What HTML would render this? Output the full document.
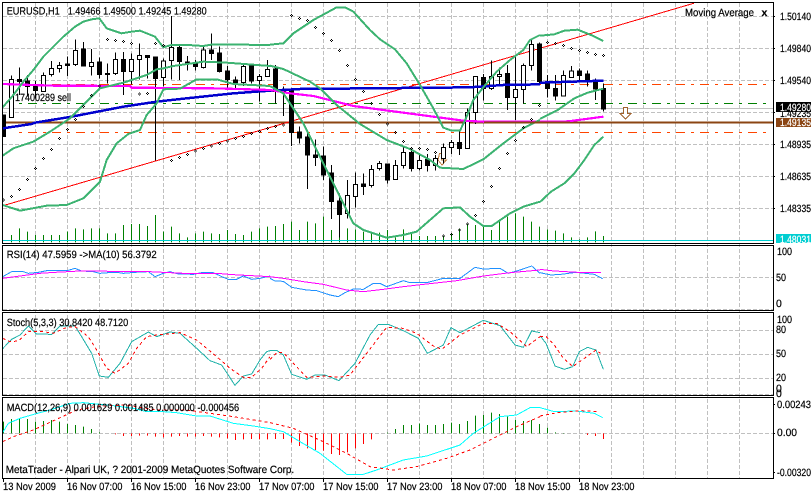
<!DOCTYPE html>
<html><head><meta charset="utf-8"><title>EURUSD,H1</title>
<style>
html,body{margin:0;padding:0;background:#fff;width:811px;height:495px;overflow:hidden}
svg{display:block;shape-rendering:crispEdges}
text{font-family:"Liberation Sans",sans-serif;font-size:10.5px;fill:#000;stroke:#000;stroke-width:.2;text-rendering:geometricPrecision;shape-rendering:auto}
text.w{fill:#fff;stroke:#fff}
.l{fill:none;vector-effect:non-scaling-stroke}
.bb{stroke:#3cb371;stroke-width:2}
.blue{stroke:#0000cd;stroke-width:2.5}
.mag{stroke:#ff00ff;stroke-width:2.2}
.rsi{stroke:#1e90ff;stroke-width:1}
.m1{stroke:#ff00ff;stroke-width:1}
.teal{stroke:#20b2aa;stroke-width:1}
.rd{stroke:#ff0000;stroke-width:1;stroke-dasharray:3 3}
.cy{stroke:#00ffff;stroke-width:1}
.vg{fill:none;stroke:#008000;stroke-width:1}
.vr{fill:none;stroke:#ff0000;stroke-width:1}
.sar{fill:none;stroke:none;marker:url(#s)}
</style></head><body>
<svg width="811" height="495" viewBox="0 0 811 495" xmlns="http://www.w3.org/2000/svg">
<defs><marker id="s" markerUnits="userSpaceOnUse" markerWidth="18" markerHeight="18" refX="9" refY="9" overflow="visible"><path d="M7.5 4.5h3v3h-3zM7.5 10.5h3v3h-3zM4.5 7.5h3v3h-3zM10.5 7.5h3v3h-3z" fill="#000"/></marker></defs>

<!-- grid -->
<g fill="none" stroke="#c0c0c0" stroke-dasharray="4 2">
<path d="M3 16.5H773M3 48.5H773M3 80.5H773M3 112.5H773M3 144.5H773M3 176.5H773M3 208.5H773M3 277.5H773M3 309.5H773M3 330.5H773M3 354.5H773M3 378.5H773M3 394.5H773M3 433.5H773"/>
<path d="M35.5 3V478M67.5 3V478M99.5 3V478M131.5 3V478M163.5 3V478M195.5 3V478M227.5 3V478M259.5 3V478M291.5 3V478M323.5 3V478M355.5 3V478M387.5 3V478M419.5 3V478M451.5 3V478M483.5 3V478M515.5 3V478M547.5 3V478M579.5 3V478M611.5 3V478M643.5 3V478M675.5 3V478M707.5 3V478M739.5 3V478"/>
</g>

<!-- horizontal objects -->
<path d="M3 108.5H773" stroke="#c0c0c0" fill="none"/>
<path d="M18 103.5H766" stroke="#008000" stroke-dasharray="9 6 3 6" stroke-dashoffset="14" fill="none"/>
<path d="M15 84.5H766M15 132.5H766" stroke="#ff4500" stroke-dasharray="9 6 3 6" stroke-dashoffset="11" fill="none"/>
<path d="M3 122.5H773" stroke="#8b4513" stroke-width="2" fill="none"/>
<path d="M3 205.7L694 3.2" stroke="#ff0000" fill="none"/>

<!-- arrows -->
<path d="M623.5 107.5h4v6h3.5L625.5 119 620 113.5h3.5z" fill="#fff" stroke="#a0622d"/>
<path d="M439.5 153.5h2v6.5h5L442 165l-4-5z" fill="none" stroke="#c08040"/>

<g transform="scale(1,.33333)">
<!-- volume -->
<path class="vg" d="M11.5 705V727M19.5 685V727M27.5 695V727M35.5 705V727M43.5 705V727M51.5 705V727M59.5 705V727M67.5 695V727M75.5 685V727M83.5 688V727M91.5 685V727M99.5 685V727M107.5 700V727M115.5 700V727M123.5 675V727M131.5 672V727M139.5 672V727M147.5 678V727M155.5 645V727M163.5 695V727M171.5 680V727M179.5 700V727M187.5 712V727M195.5 700V727M203.5 695V727M211.5 700V727M219.5 702V727M227.5 690V727M235.5 702V727M243.5 705V727M251.5 695V727M259.5 685V727M267.5 680V727M275.5 678V727M283.5 672V727M291.5 665V727M299.5 690V727M307.5 665V727M315.5 670V727M323.5 650V727M331.5 690V727M339.5 665V727M347.5 685V727M355.5 688V727M363.5 695V727M371.5 700V727M379.5 698V727M387.5 690V727M395.5 712V727M403.5 688V727M411.5 700V727M419.5 708V727M427.5 708V727M435.5 708V727M443.5 708V727M451.5 702V727M459.5 688V727M467.5 672V727M475.5 675V727M483.5 680V727M491.5 690V727M499.5 665V727M507.5 650V727M515.5 640V727M523.5 650V727M531.5 665V727M539.5 680V727M547.5 688V727M555.5 692V727M563.5 700V727M571.5 712V727M579.5 718V727M587.5 712V727M595.5 694V727M603.5 708V727"/>
<!-- wicks -->
<path class="l" stroke="#000" stroke-width="1" d="M11.5 226V352M19.5 202V285M27.5 225V290M35.5 243V295M43.5 218V275M51.5 183V230M59.5 186V218M67.5 170V228M75.5 118V198M83.5 126V200M91.5 147V226M99.5 172V236M107.5 190V250M115.5 158V225M123.5 156V285M131.5 160V254M139.5 130V238M147.5 165V235M155.5 171V482M163.5 176V260M171.5 48V238M179.5 136V240M187.5 168V212M195.5 180V212M203.5 135V205M211.5 100V180M219.5 140V218M227.5 198V268M235.5 230V268M243.5 190V258M251.5 190V250M259.5 222V305M267.5 180V230M275.5 195V310M283.5 260V348M291.5 265V438M299.5 380V430M307.5 396V567M315.5 418V498M323.5 440V540M331.5 495V657M339.5 580V712M347.5 540V655M355.5 518V622M363.5 520V585M371.5 495V562M379.5 483V512M387.5 490V550M395.5 480V540M403.5 443V505M411.5 445V515M419.5 462V512M427.5 462V515M435.5 465V512M443.5 430V490M451.5 420V462M459.5 390V465M467.5 326V445M475.5 229V372M483.5 222V302M491.5 182V270M499.5 203V255M507.5 195V330M515.5 168V360M523.5 190V310M531.5 120V212M539.5 128V250M547.5 225V293M555.5 225V302M563.5 212V290M571.5 198V233M579.5 205V240M587.5 212V260M595.5 235V300M603.5 250V335"/>
<!-- black bodies -->
<path class="l" style="fill:#000" stroke="#000" stroke-width="1" d="M3.5 345h2V410h-2zM17.5 238h4V245h-4zM25.5 243h4V260h-4zM33.5 258h4V272h-4zM65.5 192h4V197h-4zM81.5 147h4V198h-4zM97.5 186h4V224h-4zM105.5 220h4V224h-4zM121.5 178h4V214h-4zM145.5 166h4V172h-4zM153.5 171h4V236h-4zM177.5 142h4V184h-4zM185.5 186h4V191h-4zM193.5 190h4V200h-4zM209.5 150h4V161h-4zM217.5 159h4V215h-4zM225.5 213h4V239h-4zM233.5 240h4V247h-4zM249.5 198h4V243h-4zM273.5 207h4V275h-4zM281.5 268h4V276h-4zM289.5 270h4V398h-4zM297.5 396h4V414h-4zM305.5 411h4V465h-4zM313.5 465h4V473h-4zM321.5 468h4V525h-4zM329.5 519h4V605h-4zM337.5 603h4V644h-4zM361.5 552h4V560h-4zM385.5 492h4V540h-4zM409.5 457h4V506h-4zM425.5 478h4V497h-4zM457.5 427h4V445h-4zM481.5 232h4V265h-4zM505.5 220h4V293h-4zM537.5 132h4V245h-4zM545.5 245h4V265h-4zM553.5 265h4V288h-4zM577.5 213h4V226h-4zM585.5 222h4V245h-4zM593.5 241h4V267h-4zM601.5 265h4V327h-4z"/>
<!-- white bodies -->
<path class="l" style="fill:#fff" stroke="#000" stroke-width="1" d="M9.5 238h4V352h-4zM41.5 226h4V275h-4zM49.5 205h4V224h-4zM57.5 196h4V205h-4zM73.5 151h4V194h-4zM89.5 187h4V199h-4zM113.5 178h4V220h-4zM129.5 178h4V214h-4zM137.5 166h4V178h-4zM161.5 183h4V232h-4zM169.5 142h4V181h-4zM201.5 150h4V203h-4zM241.5 199h4V247h-4zM257.5 229h4V241h-4zM265.5 208h4V229h-4zM345.5 586h4V641h-4zM353.5 553h4V590h-4zM369.5 508h4V557h-4zM377.5 490h4V506h-4zM393.5 496h4V538h-4zM401.5 457h4V497h-4zM417.5 481h4V506h-4zM433.5 476h4V496h-4zM441.5 442h4V476h-4zM449.5 427h4V442h-4zM465.5 337h4V445h-4zM473.5 229h4V338h-4zM489.5 229h4V265h-4zM497.5 223h4V229h-4zM513.5 268h4V292h-4zM521.5 196h4V268h-4zM529.5 133h4V196h-4zM561.5 226h4V288h-4zM569.5 213h4V232h-4z"/>
</g>
<path d="M3 240.5H773" stroke="#00ced1" fill="none"/>

<!-- main indicators -->
<g transform="scale(.33333)">
<polyline class="l blue" points="8,385 95,372 105,368 215,350 370,320 470,305 560,295 700,280 810,272"/>
<polyline class="l mag" points="8,252 160,257 390,258 395,263 640,265 750,268 810,270"/>
<polyline class="l bb" points="8,322 40,285 70,245 100,210 130,170 160,140 190,110 225,80 250,65 275,58 298,55 320,85 365,100 395,95 420,92 465,110 490,142 514,135 565,135 610,138 640,133 810,135"/>
<polyline class="l bb" points="8,467 40,445 100,425 150,395 210,355 260,305 300,265 370,248 440,225 470,208 490,205 520,198 610,185 680,188 810,198"/>
<polyline class="l bb" points="8,615 60,632 140,617 200,615 250,595 300,545 320,480 350,430 385,402 420,390 440,345 470,310 490,268 540,266 590,238 650,238 700,252 810,258"/>
<path class="sar" d="M10 600M34 590M58 568M82 538M106 505M130 475M154 448M178 415M202 388M226 358M250 320M274 287M298 258M418 282M442 280M322 118M346 122M370 125M394 130M466 130M490 137M514 482M538 472M562 463M586 453M610 445M634 438M658 430M682 423M706 416M730 409M754 400M778 394M802 385"/>
</g>
<g transform="translate(270,0) scale(.33333)">
<polyline class="l blue" points="0,272 90,267 600,262 700,255 810,253"/>
<polyline class="l mag" points="0,270 60,280 130,288 250,318 430,342 580,362 640,365 810,365"/>
<polyline class="l bb" points="0,134 40,130 70,100 130,60 200,22 225,22 250,35 300,90 330,118 375,148 410,190 450,255 490,325 520,383 545,392 570,392 590,350 610,300 640,262 680,215 720,180 760,150 780,120 810,105"/>
<polyline class="l bb" points="0,197 40,207 120,245 150,265 200,315 270,372 350,420 420,447 480,480 510,503 580,507 640,478 700,430 760,385 800,365 810,360"/>
<polyline class="l bb" points="0,258 40,280 100,370 150,470 200,570 250,670 280,690 350,713 400,705 440,695 520,625 570,622 600,650 640,678 665,678 720,640 760,620 810,605"/>
<path class="sar" d="M16 380M40 375M64 46M88 55M112 62M136 82M160 100M184 122M208 152M232 196M256 238M280 274M304 310M328 343M352 372M376 397M400 424M424 445M448 445M472 449M496 457M520 708M544 703M568 690M592 672M616 646M640 604M664 559M688 505M712 460M736 422M760 382M784 358M808 316"/>
</g>
<g transform="translate(541,0) scale(.33333)">
<polyline class="l blue" points="-3,248 187,242"/>
<polyline class="l mag" points="-3,365 66,365 90,363 187,350"/>
<polyline class="l bb" points="-3,107 40,103 70,92 110,89 150,105 187,123"/>
<polyline class="l bb" points="-3,357 50,330 100,295 140,278 187,266"/>
<polyline class="l bb" points="-3,606 30,575 70,550 100,520 130,480 160,435 187,410"/>
<path class="sar" d="M19 127M43 130M67 136M91 145M115 151M139 157M163 163M187 166"/>
</g>
<path d="M484 122.5H570" stroke="#8b4513" stroke-width="2" fill="none"/>

<!-- MACD histogram -->
<g transform="translate(0,240) scale(1,.33333)">
<path class="vg" d="M3.5 545V580M11.5 537V580M19.5 534V580M27.5 537V580M35.5 545V580M43.5 543V580M51.5 540V580M59.5 545V580M67.5 552V580M75.5 555V580M83.5 560V580M91.5 567V580M99.5 577V580M387.5 578V580M395.5 567V580M403.5 555V580M411.5 555V580M419.5 551V580M427.5 555V580M435.5 555V580M443.5 552V580M451.5 548V580M459.5 552V580M467.5 543V580M475.5 527V580M483.5 525V580M491.5 518V580M499.5 522V580M507.5 530V580M515.5 540V580M523.5 543V580M531.5 540V580M539.5 552V580M547.5 563V580M555.5 577V580M563.5 579V580"/>
<path class="vr" d="M115.5 580V583M123.5 580V588M131.5 580V588M139.5 580V587M147.5 580V587M155.5 580V590M163.5 580V592M171.5 580V590M179.5 580V588M187.5 580V590M195.5 580V590M203.5 580V588M211.5 580V590M219.5 580V592M227.5 580V595M235.5 580V600M243.5 580V598M251.5 580V597M259.5 580V598M267.5 580V598M275.5 580V597M283.5 580V597M291.5 580V608M299.5 580V618M307.5 580V625M315.5 580V630M323.5 580V632M331.5 580V642M339.5 580V645M347.5 580V637M355.5 580V625M363.5 580V612M371.5 580V598M587.5 580V585M595.5 580V588M603.5 580V597"/>
</g>

<!-- lower indicators -->
<g transform="translate(0,240) scale(.33333)">
<polyline class="l rsi" points="8,110 35,95 70,95 85,100 115,97 140,92 205,91 225,85 245,93 280,95 300,100 325,98 350,97 370,100 405,97 445,95 465,110 490,100 510,95 535,102 580,103 610,97 640,98 670,112 685,118 710,118 730,108 755,118 780,115 810,108"/>
<polyline class="l m1" points="8,115 60,108 120,100 165,97 240,93 450,95 550,100 650,100 700,104 810,110"/>
<polyline class="l teal" points="8,326 35,298 60,285 85,258 110,282 155,283 180,258 225,258 245,290 275,340 298,408 325,412 360,370 395,305 445,276 470,290 510,276 540,280 590,325 630,362 665,375 705,436 730,408 755,402 780,360 800,335 810,332"/>
<polyline class="l rd" points="8,295 30,305 55,303 85,275 130,275 160,280 200,262 225,260 265,290 290,330 320,385 345,400 385,370 410,325 440,290 470,285 540,278 590,300 650,350 690,385 730,412 755,412 785,385 810,350"/>
<polyline class="l cy" points="8,578 25,550 60,535 105,522 150,510 210,490 250,488 290,492 340,497 400,505 440,515 490,515 530,518 590,528 630,528 700,550 760,558 810,566"/>
<polyline class="l rd" points="8,605 40,590 100,570 165,540 230,510 300,498 380,495 470,510 560,510 700,530 810,548"/>
</g>
<g transform="translate(270,240) scale(.33333)">
<polyline class="l rsi" points="0,115 15,123 40,124 65,142 110,150 140,152 180,165 205,170 225,158 250,147 280,148 310,130 330,130 350,140 400,122 420,128 470,128 520,115 570,115 615,82 640,87 690,85 715,100 750,90 785,78 810,100"/>
<polyline class="l m1" points="0,110 40,115 100,125 160,133 230,150 280,155 340,148 400,140 470,132 560,122 640,108 720,98 810,90"/>
<polyline class="l teal" points="0,331 20,331 40,345 65,403 110,418 135,405 165,405 207,422 255,370 300,285 325,253 355,253 400,272 445,295 472,340 520,315 543,263 570,278 640,241 690,257 735,315 760,322 785,273 810,278"/>
<polyline class="l rd" points="0,358 20,338 40,338 70,370 110,412 160,408 210,412 240,405 290,340 350,262 400,265 440,280 490,318 515,328 570,285 640,250 680,250 720,275 770,320 810,290"/>
<polyline class="l cy" points="0,566 40,575 90,605 150,640 230,703 280,703 320,690 400,660 470,648 540,625 570,615 610,580 690,530 740,525 780,503 810,503"/>
<polyline class="l rd" points="0,548 70,565 160,605 230,640 300,680 370,690 440,680 530,655 600,630 680,590 740,560 810,530"/>
</g>
<g transform="translate(541,240) scale(.33333)">
<polyline class="l rsi" points="-3,98 30,105 60,103 105,97 160,103 185,116"/>
<polyline class="l m1" points="-3,88 40,93 110,97 180,98"/>
<polyline class="l teal" points="-3,287 15,310 42,378 70,388 95,380 115,335 140,322 165,330 187,388"/>
<polyline class="l rd" points="-3,289 15,290 40,315 65,352 95,380 130,355 165,330 178,340"/>
<polyline class="l cy" points="-3,503 40,515 105,513 160,520 185,533"/>
<polyline class="l rd" points="-3,528 50,518 120,512 175,515"/>
</g>

<!-- borders -->
<g fill="none" stroke="#000">
<path d="M2.5 2.5H773.5V243.5H2.5Z"/>
<path d="M2.5 245.5H773.5V310.5H2.5Z"/>
<path d="M2.5 312.5H773.5V395.5H2.5Z"/>
<path d="M2.5 397.5H773.5V478.5H2.5Z"/>
<path d="M774 16.5h1M774 48.5h1M774 80.5h1M774 112.5h1M774 144.5h1M774 176.5h1M774 208.5h1M774 404.5h1M774 433.5h1M774 472.5h1"/>
<path d="M3.5 479v3M67.5 479v3M131.5 479v3M195.5 479v3M259.5 479v3M323.5 479v3M387.5 479v3M451.5 479v3M515.5 479v3M579.5 479v3"/>
</g>

<!-- chart texts -->
<text x="6.7" y="14.5" textLength="53" lengthAdjust="spacingAndGlyphs">EURUSD,H1</text>
<text x="67.7" y="14.5" textLength="139" lengthAdjust="spacingAndGlyphs">1.49466 1.49500 1.49245 1.49280</text>
<text x="15" y="101" textLength="56" lengthAdjust="spacingAndGlyphs">17400289 sell</text>
<text x="685" y="16" textLength="69" lengthAdjust="spacingAndGlyphs">Moving Average</text>
<text x="761.5" y="16" style="font-weight:bold">x</text>
<text x="6.7" y="258" textLength="150" lengthAdjust="spacingAndGlyphs">RSI(14) 47.5959  -&gt;MA(10) 56.3792</text>
<text x="6.7" y="326" textLength="121.5" lengthAdjust="spacingAndGlyphs">Stoch(5,3,3) 30.8420 48.7120</text>
<text x="6.7" y="411" textLength="232.5" lengthAdjust="spacingAndGlyphs">MACD(12,26,9) 0.001629 0.001485 0.000000 -0.000456</text>
<text x="5.7" y="473" textLength="288.5" lengthAdjust="spacingAndGlyphs">MetaTrader - Alpari UK, ? 2001-2009 MetaQuotes Software Corp.</text>

<!-- price axis -->
<g>
<text x="780" y="20" textLength="31" lengthAdjust="spacingAndGlyphs">1.50140</text>
<text x="780" y="52" textLength="31" lengthAdjust="spacingAndGlyphs">1.49840</text>
<text x="780" y="84" textLength="31" lengthAdjust="spacingAndGlyphs">1.49540</text>
<text x="780" y="117" textLength="31" lengthAdjust="spacingAndGlyphs">1.49235</text>
<text x="780" y="148" textLength="31" lengthAdjust="spacingAndGlyphs">1.48935</text>
<text x="780" y="180" textLength="31" lengthAdjust="spacingAndGlyphs">1.48635</text>
<text x="780" y="212" textLength="31" lengthAdjust="spacingAndGlyphs">1.48335</text>
<rect x="776" y="102" width="35" height="10" fill="#000"/>
<text class="w" x="780" y="111" textLength="31" lengthAdjust="spacingAndGlyphs">1.49280</text>
<rect x="776" y="118" width="35" height="9" fill="#8b4513"/>
<text class="w" x="780" y="126" textLength="31" lengthAdjust="spacingAndGlyphs">1.49135</text>
<rect x="776" y="234" width="35" height="9" fill="#00ced1"/>
<text class="w" x="780" y="243" textLength="31" lengthAdjust="spacingAndGlyphs">1.48031</text>
<text x="777" y="255" textLength="15" lengthAdjust="spacingAndGlyphs">100</text>
<text x="776" y="281" textLength="10" lengthAdjust="spacingAndGlyphs">50</text>
<text x="776" y="307">0</text>
<text x="777" y="323" textLength="15" lengthAdjust="spacingAndGlyphs">100</text>
<text x="776" y="333" textLength="10" lengthAdjust="spacingAndGlyphs">80</text>
<text x="776" y="357" textLength="10" lengthAdjust="spacingAndGlyphs">50</text>
<text x="776" y="381" textLength="10" lengthAdjust="spacingAndGlyphs">20</text>
<text x="776" y="392">0</text>
<text x="776" y="397">0</text>
<text x="777" y="408" textLength="34" lengthAdjust="spacingAndGlyphs">0.00243</text>
<text x="777" y="436" textLength="20" lengthAdjust="spacingAndGlyphs">0.00</text>
<text x="777" y="476" textLength="34" lengthAdjust="spacingAndGlyphs">-0.00320</text>
</g>

<!-- time axis -->
<g>
<text x="3" y="490" textLength="53" lengthAdjust="spacingAndGlyphs">13 Nov 2009</text>
<text x="67" y="490" textLength="55.5" lengthAdjust="spacingAndGlyphs">16 Nov 07:00</text>
<text x="131" y="490" textLength="55.5" lengthAdjust="spacingAndGlyphs">16 Nov 15:00</text>
<text x="195" y="490" textLength="55.5" lengthAdjust="spacingAndGlyphs">16 Nov 23:00</text>
<text x="259" y="490" textLength="55.5" lengthAdjust="spacingAndGlyphs">17 Nov 07:00</text>
<text x="323" y="490" textLength="55.5" lengthAdjust="spacingAndGlyphs">17 Nov 15:00</text>
<text x="387" y="490" textLength="55.5" lengthAdjust="spacingAndGlyphs">17 Nov 23:00</text>
<text x="451" y="490" textLength="55.5" lengthAdjust="spacingAndGlyphs">18 Nov 07:00</text>
<text x="515" y="490" textLength="55.5" lengthAdjust="spacingAndGlyphs">18 Nov 15:00</text>
<text x="579" y="490" textLength="55.5" lengthAdjust="spacingAndGlyphs">18 Nov 23:00</text>
</g>
</svg>
</body></html>
